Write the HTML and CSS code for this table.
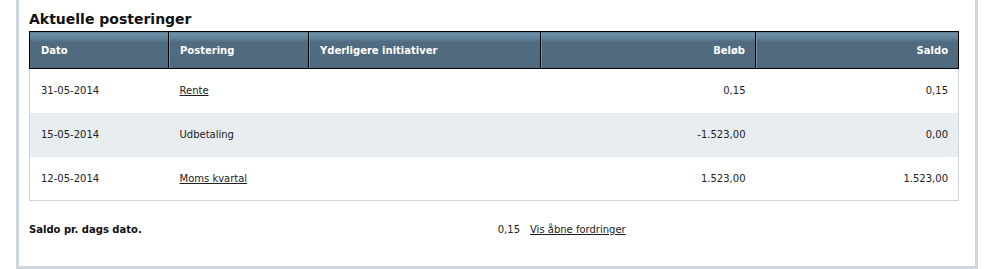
FILE: index.html
```html
<!DOCTYPE html>
<html lang="da">
<head>
<meta charset="utf-8">
<title>Aktuelle posteringer</title>
<link rel="stylesheet" href="styles.css">
</head>
<body>
<div class="panel">
  <h2 class="title">Aktuelle posteringer</h2>
  <table class="ledger">
    <colgroup>
      <col class="c1"><col class="c2"><col class="c3"><col class="c4"><col class="c5">
    </colgroup>
    <thead>
      <tr>
        <th>Dato</th>
        <th>Postering</th>
        <th>Yderligere initiativer</th>
        <th class="num">Beløb</th>
        <th class="num">Saldo</th>
      </tr>
    </thead>
    <tbody>
      <tr>
        <td>31-05-2014</td>
        <td><a href="#">Rente</a></td>
        <td></td>
        <td class="num">0,15</td>
        <td class="num">0,15</td>
      </tr>
      <tr class="alt">
        <td>15-05-2014</td>
        <td>Udbetaling</td>
        <td></td>
        <td class="num">-1.523,00</td>
        <td class="num">0,00</td>
      </tr>
      <tr>
        <td>12-05-2014</td>
        <td><a href="#">Moms kvartal</a></td>
        <td></td>
        <td class="num">1.523,00</td>
        <td class="num">1.523,00</td>
      </tr>
    </tbody>
  </table>
  <div class="summary">
    <span class="label">Saldo pr. dags dato.</span>
    <span class="value">0,15</span>
    <a class="link" href="#">Vis åbne fordringer</a>
  </div>
</div>
</body>
</html>
```

FILE: styles.css
```css
html, body {
  margin: 0;
  padding: 0;
  background: #ffffff;
}
body {
  font-family: "DejaVu Sans", Verdana, sans-serif;
  font-size: 10px;
  color: #222222;
  padding: 0 12px 0 16px;
}
.panel {
  border: 3px solid #cdd5e0;
  border-top: none;
  padding: 0 16px 0 10px;
  height: 269px;
  box-sizing: border-box;
}
.title {
  margin: 0;
  padding-top: 11px;
  font-size: 14px;
  line-height: 17px;
  font-weight: bold;
  color: #111111;
  height: 31px;
  box-sizing: border-box;
}
.ledger {
  width: 100%;
  border-collapse: collapse;
  table-layout: fixed;
}
.c1 { width: 139px; }
.c2 { width: 140px; }
.c3 { width: 232px; }
.c4 { width: 215px; }
.c5 { width: auto; }
.ledger thead th {
  height: 36px;
  padding: 0 10px 0 11px;
  text-align: left;
  font-weight: bold;
  color: #ffffff;
  border: 1px solid #000000;
  background: linear-gradient(to bottom, #7090aa 0px, #62829b 6px, #56738a 8px, #506b80 10px, #4f6a7e 100%);
  box-shadow: inset 1px 0 0 #7891a6;
  vertical-align: middle;
}
.ledger thead th:first-child {
  box-shadow: none;
}
.ledger .num {
  text-align: right;
}
.ledger thead th.num {
  padding-right: 10px;
}
.ledger tbody td {
  height: 44px;
  padding: 0 10px 0 11px;
  vertical-align: middle;
  box-sizing: border-box;
}
.ledger tbody tr td:first-child {
  border-left: 1px solid #cdd5e0;
}
.ledger tbody tr td:last-child {
  border-right: 1px solid #cdd5e0;
}
.ledger tbody tr:last-child td {
  border-bottom: 1px solid #cdd5e0;
}
.ledger tbody tr.alt td {
  background: #e8edf0;
}
a {
  color: #222222;
  text-decoration: underline;
}
.summary {
  display: grid;
  grid-template-columns: 440px 51px auto;
  align-items: center;
  margin-top: 22px;
  line-height: 14px;
}
.summary .label {
  font-weight: bold;
  color: #111111;
}
.summary .value {
  text-align: right;
}
.summary .link {
  padding-left: 10px;
}
```
